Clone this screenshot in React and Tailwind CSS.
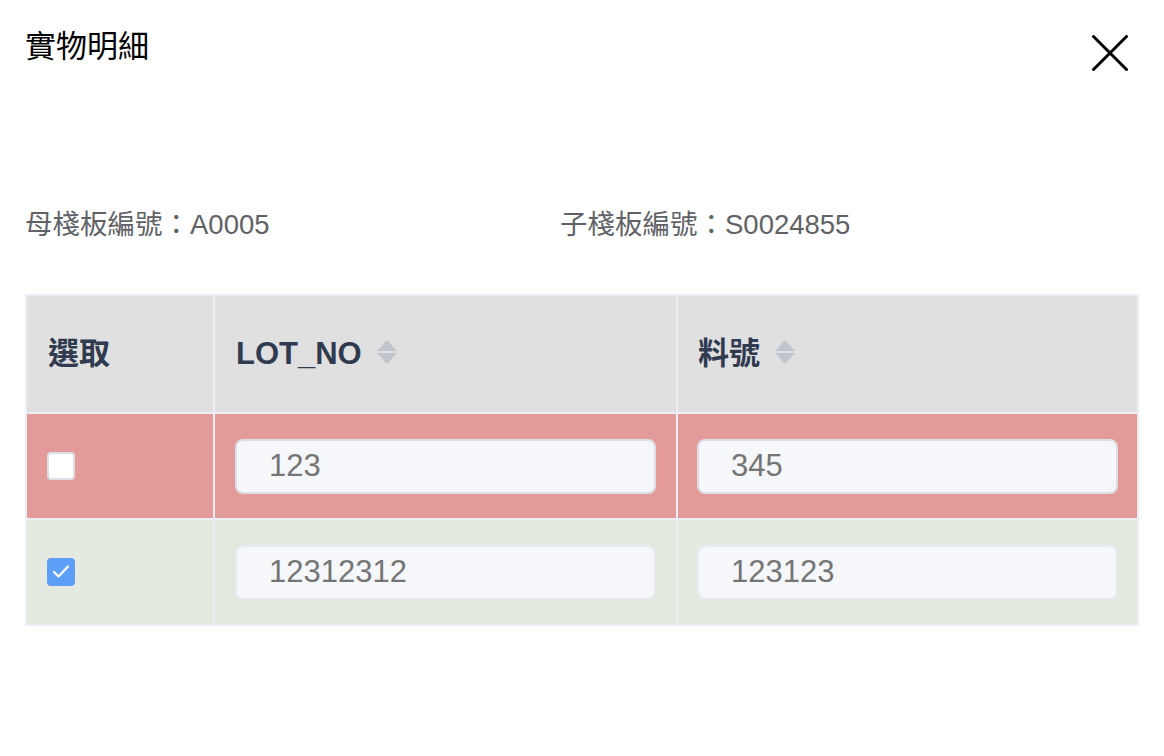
import { useState } from "react";

const rows = [
  { id: 1, lot: "123", part: "345", checked: false, bg: "bg-[#e39b99]", border: "border-[#dcdfe6]" },
  { id: 2, lot: "12312312", part: "123123", checked: true, bg: "bg-[#e5eae1]", border: "border-[#e6e9ef]" },
];

function SortIcon() {
  return (
    <svg width="20" height="24" viewBox="0 0 20 24" className="ml-[15px] mb-[4px]">
      <polygon points="0,11 10,0 20,11" fill="#c0c4cc" />
      <polygon points="0,13 20,13 10,24" fill="#c0c4cc" />
    </svg>
  );
}

function Checkbox({ checked, onChange }) {
  return (
    <button
      onClick={onChange}
      className={
        checked
          ? "h-[28px] w-[28px] rounded-[4px] bg-[#5c9ef8]"
          : "h-[28px] w-[28px] rounded-[4px] border-2 border-[#dcdfe6] bg-white"
      }
    >
      {checked && (
        <svg width="28" height="28" viewBox="0 0 28 28">
          <path d="M7 14 L11.5 18.5 L21 8.5" fill="none" stroke="white" strokeWidth="2.2" strokeLinecap="round" strokeLinejoin="round" />
        </svg>
      )}
    </button>
  );
}

export default function App() {
  const [data, setData] = useState(rows);

  const toggle = (id) =>
    setData((d) => d.map((r) => (r.id === id ? { ...r, checked: !r.checked } : r)));

  return (
    <div className="h-[756px] w-[1164px] bg-white font-['Liberation_Sans','Noto_Sans_CJK_TC',sans-serif]">
      {/* Header */}
      <div className="flex items-start justify-between pl-[25px] pr-[36px] pt-[24px]">
        <h2 className="text-[31px] leading-[46px] text-black">實物明細</h2>
        <button className="mt-[11px]">
          <svg width="36" height="36" viewBox="0 0 36 36">
            <path d="M1.5 1.5 L34.5 34.5 M34.5 1.5 L1.5 34.5" stroke="black" strokeWidth="3" strokeLinecap="round" />
          </svg>
        </button>
      </div>

      {/* Pallet info */}
      <div className="mt-[134px] flex px-[25px] text-[27.5px] leading-[40px] text-[#606266]">
        <div className="w-[535px]">母棧板編號：A0005</div>
        <div>子棧板編號：S0024855</div>
      </div>

      {/* Table */}
      <div className="mx-[25px] mt-[49px] grid grid-cols-[186px_461px_459px] gap-[2px] bg-[#ebeef5] p-[2px]">
        <div className="flex h-[116px] items-center bg-[#e0e0e0] pl-[21px] text-[31px] font-bold text-[#303b50]">
          選取
        </div>
        <div className="flex h-[116px] items-center bg-[#e0e0e0] pl-[21px] text-[31px] font-bold text-[#303b50]">
          LOT_NO
          <SortIcon />
        </div>
        <div className="flex h-[116px] items-center bg-[#e0e0e0] pl-[20px] text-[31px] font-bold text-[#303b50]">
          料號
          <SortIcon />
        </div>

        {data.map((r) => [
          <div key={r.id + "c"} className={`flex h-[104px] items-center pl-[20px] ${r.bg}`}>
            <Checkbox checked={r.checked} onChange={() => toggle(r.id)} />
          </div>,
          <div key={r.id + "l"} className={`flex h-[104px] items-center px-[20px] ${r.bg}`}>
            <input
              readOnly
              value={r.lot}
              className={`h-[55px] w-full rounded-[8px] border-2 ${r.border} bg-[#f5f7fa] px-[32px] text-[31px] text-[#757575] outline-none`}
            />
          </div>,
          <div key={r.id + "p"} className={`flex h-[104px] items-center px-[19px] ${r.bg}`}>
            <input
              readOnly
              value={r.part}
              className={`h-[55px] w-full rounded-[8px] border-2 ${r.border} bg-[#f5f7fa] px-[32px] text-[31px] text-[#757575] outline-none`}
            />
          </div>,
        ])}
      </div>
    </div>
  );
}
